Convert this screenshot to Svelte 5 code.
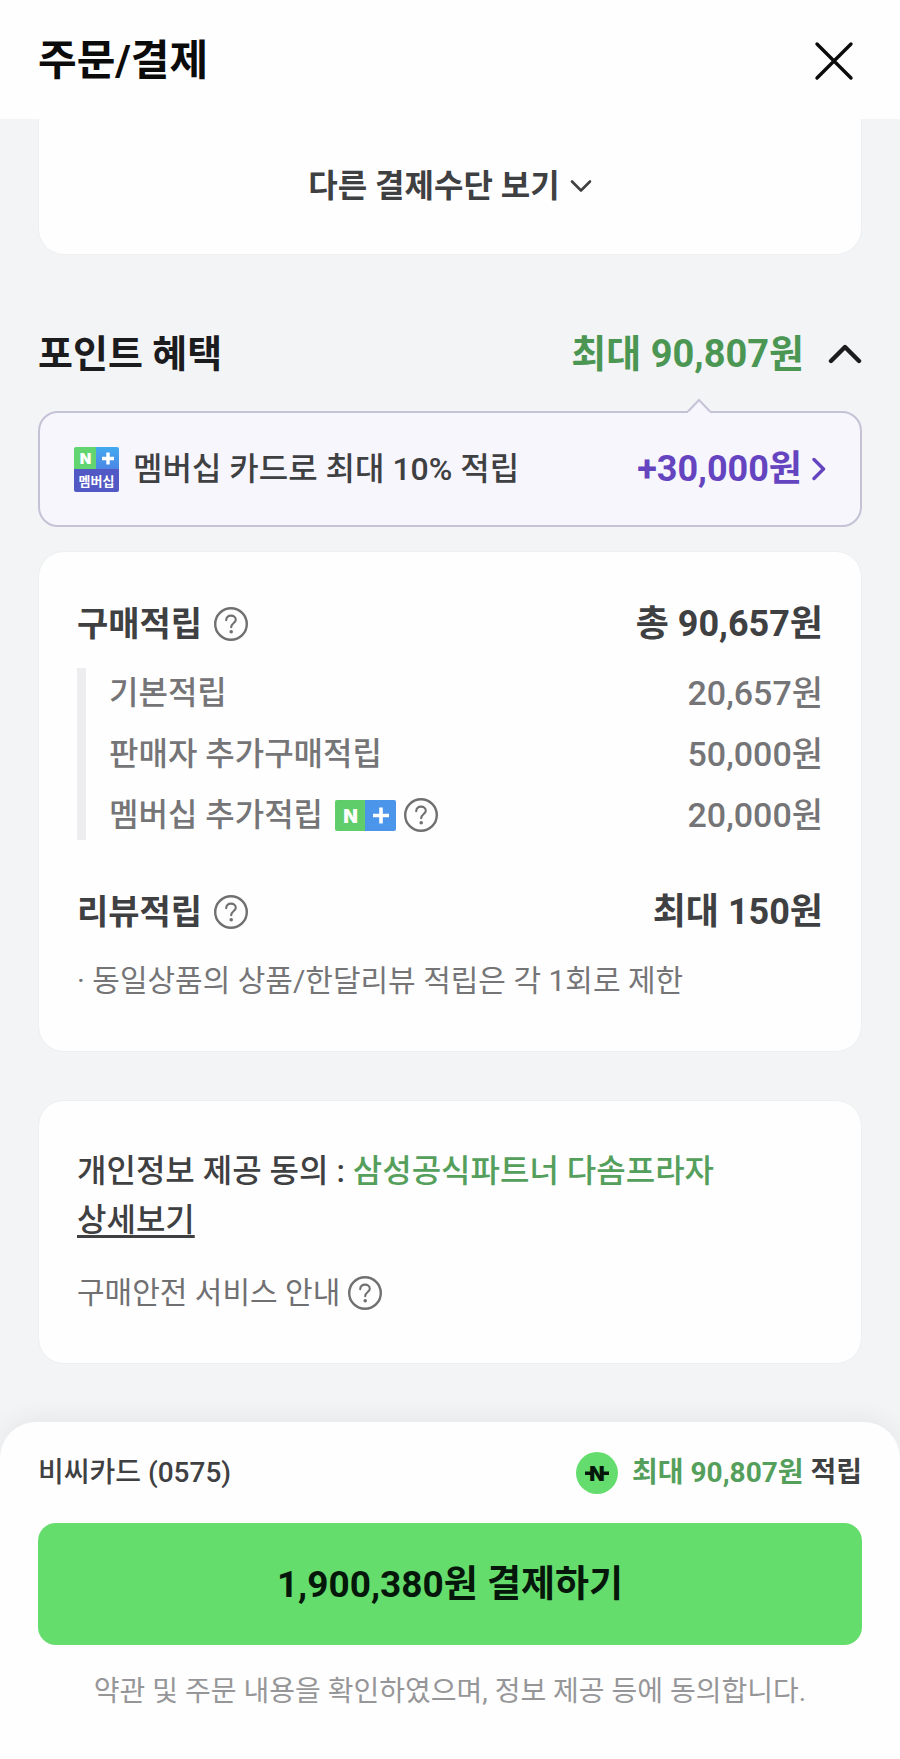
<script>
    let benefitOpen = true;

    const purchase = [
        { name: "기본적립", amount: "20,657" },
        { name: "판매자 추가구매적립", amount: "50,000" },
        { name: "멤버십 추가적립", amount: "20,000", plus: true },
    ];
</script>

{#snippet help(label)}
    <button class="help" type="button" aria-label={label}>
        <svg width="34" height="34" viewBox="0 0 34 34" fill="none" stroke="#707072">
            <circle cx="17" cy="17" r="15.8" stroke-width="2.4" />
            <path
                d="M12.2 13.2C12.2 10.2 14.3 8.6 17 8.6C19.8 8.6 21.8 10.3 21.8 12.8C21.8 16 17.2 16.2 17.2 20.2"
                stroke-width="2.1"
                stroke-linecap="round"
            />
            <circle cx="17.2" cy="24.8" r="1.8" fill="#707072" stroke="none" />
        </svg>
    </button>
{/snippet}

<div class="page">
    <header class="top">
        <h1>주문/결제</h1>
        <button type="button" aria-label="닫기">
            <svg width="40" height="40" viewBox="0 0 40 40" fill="none" stroke="#0b0b0c" stroke-width="3.4" stroke-linecap="round">
                <path d="M3 3L37 37M37 3L3 37" />
            </svg>
        </button>
    </header>

    <main>
        <section class="card methods">
            <button type="button">
                다른 결제수단 보기
                <svg width="22" height="14" viewBox="0 0 22 14" fill="none" stroke="#404042" stroke-width="2.6" stroke-linecap="round" stroke-linejoin="round">
                    <path d="M2 2.5L11 11.5L20 2.5" />
                </svg>
            </button>
        </section>

        <div class="benefit-title">
            <h2>포인트 혜택</h2>
            <button type="button" aria-expanded={benefitOpen} on:click={() => (benefitOpen = !benefitOpen)}>
                최대 90,807원
                <svg class:closed={!benefitOpen} width="34" height="20" viewBox="0 0 34 20" fill="none" stroke="#1c1c1f" stroke-width="4.4" stroke-linecap="round" stroke-linejoin="round">
                    <path d="M3 17L17 3L31 17" />
                </svg>
            </button>
        </div>

        {#if benefitOpen}
            <a class="membership" href="#membership">
                <svg class="pointer" width="24" height="15" viewBox="0 0 24 15">
                    <path d="M1 13.5L12 2L23 13.5V15H1Z" fill="#f7f6fd" />
                    <path d="M1 13.5L12 2L23 13.5" fill="none" stroke="#c6c2d6" stroke-width="2" />
                </svg>
                <svg class="badge" width="45" height="45" viewBox="0 0 45 45">
                    <defs>
                        <linearGradient id="badge-blue" x1="0" y1="0" x2="0" y2="1">
                            <stop offset="0" stop-color="#43aaf0" />
                            <stop offset="1" stop-color="#4c84e4" />
                        </linearGradient>
                        <clipPath id="badge-clip"><rect width="45" height="45" rx="2" /></clipPath>
                    </defs>
                    <g clip-path="url(#badge-clip)">
                        <rect width="23" height="23" fill="#62d470" />
                        <rect x="22" width="23" height="23" fill="url(#badge-blue)" />
                        <rect y="22" width="45" height="23" fill="#5359c4" />
                        <path d="M34 5.500V17.500M28 11.500H40" stroke="#fff" stroke-width="3.4" />
                    </g>
                    <text class="n" x="11.500" y="17" font-size="15" text-anchor="middle">N</text>
                    <text class="kr" x="22.500" y="38.500" font-size="13" text-anchor="middle">멤버십</text>
                </svg>
                <span>멤버십 카드로 최대 10% 적립</span>
                <strong>+30,000원</strong>
                <svg width="14" height="24" viewBox="0 0 14 24" fill="none" stroke="#6544c0" stroke-width="3.4" stroke-linecap="round" stroke-linejoin="round">
                    <path d="M2 2.500L11.500 12L2 21.500" />
                </svg>
            </a>

            <section class="card points">
                <div class="row head">
                    <h3>구매적립</h3>
                    {@render help("구매적립 안내")}
                    <strong>총 90,657원</strong>
                </div>
                <ul>
                    {#each purchase as p}
                        <li class="row">
                            <span>{p.name}</span>
                            {#if p.plus}
                                <svg class="plus" width="61" height="31" viewBox="0 0 61 31">
                                    <defs>
                                        <clipPath id="plus-clip"><rect width="61" height="31" rx="2" /></clipPath>
                                    </defs>
                                    <g clip-path="url(#plus-clip)">
                                        <rect width="31" height="31" fill="#5fcd69" />
                                        <rect x="30" width="31" height="31" fill="#4b96ea" />
                                        <path d="M46 7.500V23.500M38 15.500H54" stroke="#fff" stroke-width="3.6" />
                                    </g>
                                    <text class="n" x="15.500" y="22.500" font-size="19" text-anchor="middle">N</text>
                                </svg>
                                {@render help("멤버십 추가적립 안내")}
                            {/if}
                            <span class="amount">{p.amount}원</span>
                        </li>
                    {/each}
                </ul>
                <div class="row head">
                    <h3>리뷰적립</h3>
                    {@render help("리뷰적립 안내")}
                    <strong>최대 150원</strong>
                </div>
                <p class="note">· 동일상품의 상품/한달리뷰 적립은 각 1회로 제한</p>
            </section>
        {/if}

        <section class="card privacy">
            <p>
                개인정보 제공 동의 : <em>삼성공식파트너 다솜프라자</em><br />
                <a href="#detail">상세보기</a>
            </p>
            <div class="row safe">
                <span>구매안전 서비스 안내</span>
                {@render help("구매안전 서비스 안내")}
            </div>
        </section>
    </main>

    <footer>
        <div class="row pay-info">
            <span>비씨카드 (0575)</span>
            <svg class="coin" width="42" height="42" viewBox="0 0 42 42">
                <circle cx="21" cy="21" r="21" fill="#65dd6e" />
                <path d="M9 21.300H15M27 21.300H33" stroke="#04170a" stroke-width="3.6" />
                <text x="21" y="28.500" font-size="20" text-anchor="middle">N</text>
            </svg>
            <strong><em>최대 90,807원</em> 적립</strong>
        </div>
        <button class="pay" type="button">1,900,380원 결제하기</button>
        <p>약관 및 주문 내용을 확인하였으며, 정보 제공 등에 동의합니다.</p>
    </footer>
</div>

<style>
:global(body) {
    background-color: #f2f4f6;
}

.page {
    display: flex;
    flex-direction: column;
    min-height: 100vh;
    color: #3f4042;
    font-family: Roboto, "Noto Sans CJK KR", sans-serif;
    font-size: 32px;
    font-weight: 500;
}

h1, h2, h3, p, ul {
    margin: 0;
    padding: 0;
}

button {
    padding: 0;
    border: none;
    background: none;
    color: inherit;
    font: inherit;
    cursor: pointer;
}

svg {
    display: block;
    flex: none;
}

em {
    color: #559f5c;
    font-style: normal;
}

.top {
    display: flex;
    align-items: center;
    justify-content: space-between;
    padding: 31px 46px 28px 38px;
    background-color: #fefefe;
}

.top h1 {
    color: #0b0b0c;
    font-size: 42px;
    line-height: 60px;
}

main {
    flex: 1;
    padding: 0 38px 58px;
}

.card {
    border: 1px solid #eeeff1;
    border-radius: 26px;
    background-color: #fefefe;
}

.methods {
    display: flex;
    justify-content: center;
    padding: 42px 0 43px;
    border-top: none;
    border-radius: 0 0 26px 26px;
}

.methods button {
    display: flex;
    align-items: center;
    gap: 10px;
    font-weight: 700;
    line-height: 50px;
}

.benefit-title {
    display: flex;
    align-items: center;
    justify-content: space-between;
    margin: 69px 0 27px;
    line-height: 60px;
    font-size: 38px;
}

.benefit-title h2 {
    color: #1c1c1f;
    font-size: 38px;
}

.benefit-title button {
    display: flex;
    align-items: center;
    gap: 24px;
    color: #4c9654;
    font-weight: 700;
}

.closed {
    transform: rotate(180deg);
}

.membership {
    position: relative;
    display: flex;
    align-items: center;
    padding: 32px 34px;
    border: 2px solid #c6c2d6;
    border-radius: 20px;
    background-color: #f7f6fd;
    color: #3f4042;
    line-height: 48px;
    text-decoration: none;
}

.pointer {
    position: absolute;
    top: -15px;
    right: 149px;
}

.badge {
    margin-right: 14px;
}

.membership strong {
    margin: 0 10px 0 auto;
    color: #6544c0;
    font-size: 36px;
}

.n {
    fill: #fff;
    font-family: Inter, Roboto, sans-serif;
    font-weight: 900;
}

.kr {
    fill: #fff;
    font-family: "Noto Sans CJK KR", sans-serif;
    font-weight: 700;
}

.row {
    display: flex;
    align-items: center;
    line-height: 50px;
}

.points {
    margin: 24px 0 48px;
    padding: 47px 38px 50px;
}

.head {
    gap: 12px;
}

.head h3 {
    font-size: 34px;
}

.head strong {
    margin-left: auto;
    font-size: 36px;
}

.points ul {
    display: flex;
    flex-direction: column;
    gap: 11px;
    margin: 19px 0 47px;
    padding-left: 23px;
    border-left: 9px solid #ededef;
    color: #757577;
    list-style: none;
}

.plus {
    margin: 0 8px 0 12px;
}

.amount {
    margin-left: auto;
    font-size: 34px;
}

.note {
    margin-top: 24px;
    color: #757577;
    font-size: 30px;
    font-weight: 400;
    line-height: 40px;
}

.privacy {
    padding: 46px 38px 50px;
}

.privacy p {
    line-height: 49px;
}

.privacy a {
    color: inherit;
    text-underline-offset: 4px;
    text-decoration-thickness: 3px;
}

.safe {
    gap: 8px;
    margin-top: 28px;
    color: #707072;
    font-size: 30px;
    font-weight: 400;
    line-height: 40px;
}

footer {
    padding: 30px 38px 48px;
    border-radius: 36px 36px 0 0;
    background-color: #fefefe;
    box-shadow: 0 -4px 24px rgba(0, 0, 0, 0.06);
    font-size: 28px;
}

.pay-info {
    line-height: 42px;
}

.coin {
    margin: 0 14px 0 auto;
}

.coin text {
    fill: #04170a;
    font-family: Inter, Roboto, sans-serif;
    font-weight: 900;
}

.pay {
    width: 100%;
    margin: 29px 0 27px;
    padding: 32px 0 30px;
    border-radius: 18px;
    background-color: #65dd6c;
    color: #04170a;
    font-size: 37px;
    font-weight: 700;
    line-height: 60px;
}

footer p {
    color: #969698;
    font-weight: 400;
    line-height: 40px;
    text-align: center;
}
</style>
